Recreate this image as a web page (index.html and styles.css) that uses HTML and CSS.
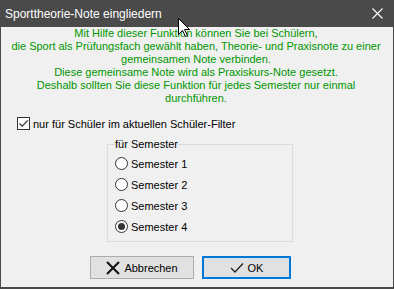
FILE: index.html
```html
<!DOCTYPE html>
<html lang="de">
<head>
    <meta charset="utf-8">
    <title>Sporttheorie-Note eingliedern</title>
    <link rel="stylesheet" href="styles.css">
</head>
<body>

<div class="window">
    <div class="titlebar">
        <span class="title">Sporttheorie-Note eingliedern</span>
        <svg class="close" width="11" height="11" viewBox="0 0 11 11">
            <path d="M0.5 0.5 L10.5 10.5 M10.5 0.5 L0.5 10.5" stroke="#fff" stroke-width="1.1" fill="none"/>
        </svg>
    </div>

    <div class="content">
        <div class="info">
            <div>Mit Hilfe dieser Funktion können Sie bei Schülern,</div>
            <div>die Sport als Prüfungsfach gewählt haben, Theorie- und Praxisnote zu einer</div>
            <div>gemeinsamen Note verbinden.</div>
            <div>Diese gemeinsame Note wird als Praxiskurs-Note gesetzt.</div>
            <div>Deshalb sollten Sie diese Funktion für jedes Semester nur einmal</div>
            <div>durchführen.</div>
        </div>

        <label class="check-row">
            <span class="checkbox">
                <svg width="11" height="11" viewBox="0 0 11 11">
                    <path d="M1.5 5.5 L4.2 8.2 L9.8 2.3" stroke="#333" stroke-width="1.2" fill="none"/>
                </svg>
            </span>
            nur für Schüler im aktuellen Schüler-Filter
        </label>

        <fieldset class="group">
            <legend>für Semester</legend>
            <label class="radio-row"><span class="radio"></span>Semester 1</label>
            <label class="radio-row"><span class="radio"></span>Semester 2</label>
            <label class="radio-row"><span class="radio"></span>Semester 3</label>
            <label class="radio-row"><span class="radio checked"></span>Semester 4</label>
        </fieldset>

        <div class="buttons">
            <button class="btn">
                <svg width="14" height="14" viewBox="0 0 14 14">
                    <path d="M1 1 L13 13 M13 1 L1 13" stroke="#111" stroke-width="2" fill="none"/>
                </svg>
                Abbrechen
            </button>
            <button class="btn default">
                <svg width="14" height="12" viewBox="0 0 14 12">
                    <path d="M1 6 L5 10 L13 1.5" stroke="#222" stroke-width="1.3" fill="none"/>
                </svg>
                OK
            </button>
        </div>
    </div>

    <!-- Mauszeiger aus dem Screenshot -->
    <svg class="cursor" width="13" height="20" viewBox="0 0 13 20">
        <path d="M0.5 0.5 L0.5 16.5 L4.5 12.5 L7.5 18.5 L9.5 17.5 L6.5 11.5 L11.5 11.5 Z" fill="#fff" stroke="#000" stroke-width="1"/>
    </svg>
</div>

</body>
</html>
```

FILE: styles.css
```css
body {
    margin: 0;
    font-family: "Liberation Sans", Arial, sans-serif;
    font-size: 11px;
    background: #f0f0f0;
}

.window {
    position: relative;
    height: 289px;
    box-sizing: border-box;
    border: 1px solid #4a4a4a;
    border-top: none;
    border-bottom-width: 2px;
    display: flex;
    flex-direction: column;
    background: #f0f0f0;
}

.titlebar {
    height: 27px;
    margin: 0 -1px;
    padding: 0 11px 0 5px;
    background: #4a4a4a;
    color: #fff;
    display: flex;
    align-items: center;
    justify-content: space-between;
}

.title {
    font-size: 12px;
    padding-top: 1px;
}

.close {
    margin-top: -1px;
}

.content {
    flex: 1;
    display: flex;
    flex-direction: column;
}

.info {
    color: #009600;
    text-align: center;
    line-height: 13px;
    white-space: nowrap;
    padding-right: 2px;
}

.check-row {
    display: flex;
    align-items: center;
    gap: 3px;
    margin: 12px 0 0 16px;
    height: 13px;
    color: #000;
}

.checkbox {
    width: 11px;
    height: 11px;
    border: 1px solid #333;
    background: #fff;
    display: flex;
    align-items: center;
    justify-content: center;
}

.group {
    margin: 7px 0 0 106px;
    width: 186px;
    height: 105px;
    box-sizing: border-box;
    border: 1px solid #dcdcdc;
    padding: 2px 7px 0 7px;
}

.group legend {
    padding: 0;
    line-height: 14px;
}

.radio-row {
    display: flex;
    align-items: center;
    gap: 3px;
    height: 21px;
}

.radio {
    width: 11px;
    height: 11px;
    border: 1px solid #333;
    border-radius: 50%;
    background: #fff;
    display: flex;
    align-items: center;
    justify-content: center;
}

.radio.checked::after {
    content: "";
    width: 7px;
    height: 7px;
    border-radius: 50%;
    background: #333;
}

.buttons {
    display: flex;
    gap: 8px;
    margin: 14px 0 0 89px;
}

.btn {
    width: 104px;
    height: 23px;
    border: 1px solid #adadad;
    background: #e1e1e1;
    font-family: inherit;
    font-size: 11px;
    color: #000;
    display: flex;
    align-items: center;
    justify-content: center;
    gap: 4px;
    padding: 0;
}

.btn.default {
    width: 89px;
    border: 2px solid #0078d7;
}

.cursor {
    position: absolute;
    left: 177px;
    top: 18px;
}
```
